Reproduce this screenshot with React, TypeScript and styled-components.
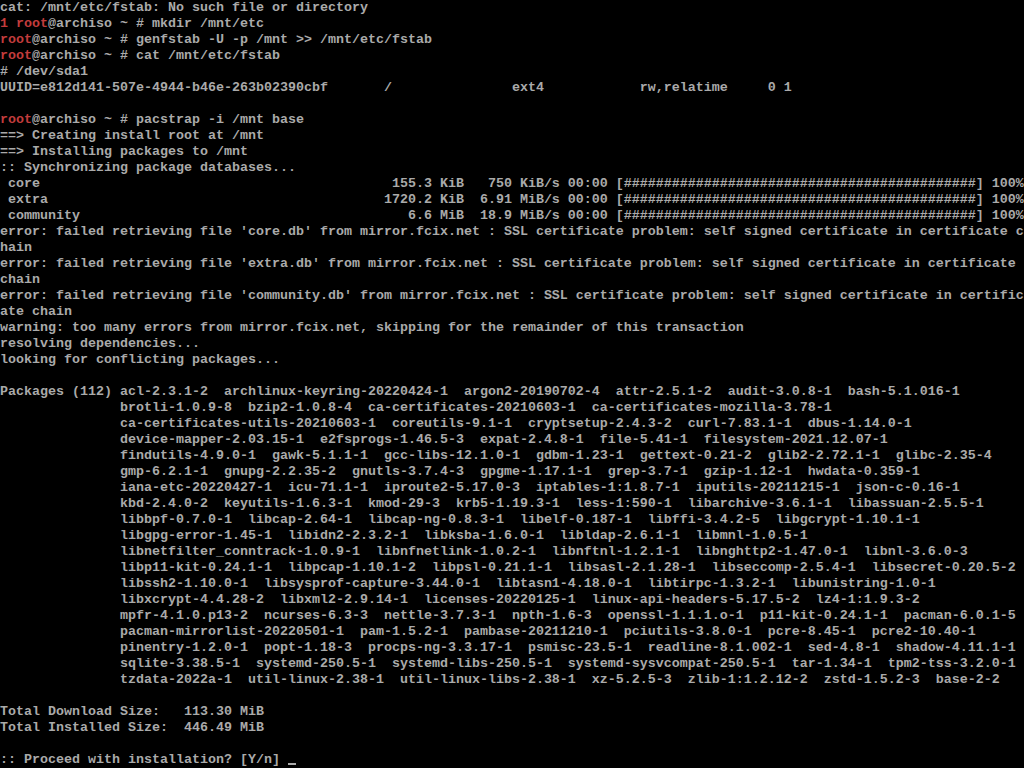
import React from 'react';
import styled, {createGlobalStyle} from 'styled-components';

const COLS = 128;

const GlobalStyle = createGlobalStyle`
    html, body {
        margin: 0;
        padding: 0;
        background: #000;
    }
`;

type Seg = { text: string; red?: boolean };
type Row = Seg[];

const prompt = (cmd: string, prefix = ''): Row => [
    {text: prefix + 'root', red: true},
    {text: '@archiso ~ # ' + cmd},
];

// wrap one plain logical line at the console width
const wrap = (text: string): Row[] => {
    const out: Row[] = [];
    for (let i = 0; i < text.length; i += COLS) {
        out.push([{text: text.slice(i, i + COLS)}]);
    }
    return out;
};

const plain = (text: string): Row => [{text}];

const syncLine = (name: string, size: string, unit: string, rate: string, rateUnit: string) =>
    `${(' ' + name).padEnd(48)}${size.padStart(6)} ${unit}  ${rate.padStart(4)} ${rateUnit}/s 00:00 [${'#'.repeat(44)}] 100%`;

const fstab = `${'UUID=e812d141-507e-4944-b46e-263b02390cbf'.padEnd(48)}${'/'.padEnd(16)}${'ext4'.padEnd(16)}${'rw,relatime'.padEnd(16)}0 1`;

const sslError = (db: string) =>
    `error: failed retrieving file '${db}' from mirror.fcix.net : SSL certificate problem: self signed certificate in certificate chain`;

const packages = [
    'acl-2.3.1-2  archlinux-keyring-20220424-1  argon2-20190702-4  attr-2.5.1-2  audit-3.0.8-1  bash-5.1.016-1',
    'brotli-1.0.9-8  bzip2-1.0.8-4  ca-certificates-20210603-1  ca-certificates-mozilla-3.78-1',
    'ca-certificates-utils-20210603-1  coreutils-9.1-1  cryptsetup-2.4.3-2  curl-7.83.1-1  dbus-1.14.0-1',
    'device-mapper-2.03.15-1  e2fsprogs-1.46.5-3  expat-2.4.8-1  file-5.41-1  filesystem-2021.12.07-1',
    'findutils-4.9.0-1  gawk-5.1.1-1  gcc-libs-12.1.0-1  gdbm-1.23-1  gettext-0.21-2  glib2-2.72.1-1  glibc-2.35-4',
    'gmp-6.2.1-1  gnupg-2.2.35-2  gnutls-3.7.4-3  gpgme-1.17.1-1  grep-3.7-1  gzip-1.12-1  hwdata-0.359-1',
    'iana-etc-20220427-1  icu-71.1-1  iproute2-5.17.0-3  iptables-1:1.8.7-1  iputils-20211215-1  json-c-0.16-1',
    'kbd-2.4.0-2  keyutils-1.6.3-1  kmod-29-3  krb5-1.19.3-1  less-1:590-1  libarchive-3.6.1-1  libassuan-2.5.5-1',
    'libbpf-0.7.0-1  libcap-2.64-1  libcap-ng-0.8.3-1  libelf-0.187-1  libffi-3.4.2-5  libgcrypt-1.10.1-1',
    'libgpg-error-1.45-1  libidn2-2.3.2-1  libksba-1.6.0-1  libldap-2.6.1-1  libmnl-1.0.5-1',
    'libnetfilter_conntrack-1.0.9-1  libnfnetlink-1.0.2-1  libnftnl-1.2.1-1  libnghttp2-1.47.0-1  libnl-3.6.0-3',
    'libp11-kit-0.24.1-1  libpcap-1.10.1-2  libpsl-0.21.1-1  libsasl-2.1.28-1  libseccomp-2.5.4-1  libsecret-0.20.5-2',
    'libssh2-1.10.0-1  libsysprof-capture-3.44.0-1  libtasn1-4.18.0-1  libtirpc-1.3.2-1  libunistring-1.0-1',
    'libxcrypt-4.4.28-2  libxml2-2.9.14-1  licenses-20220125-1  linux-api-headers-5.17.5-2  lz4-1:1.9.3-2',
    'mpfr-4.1.0.p13-2  ncurses-6.3-3  nettle-3.7.3-1  npth-1.6-3  openssl-1.1.1.o-1  p11-kit-0.24.1-1  pacman-6.0.1-5',
    'pacman-mirrorlist-20220501-1  pam-1.5.2-1  pambase-20211210-1  pciutils-3.8.0-1  pcre-8.45-1  pcre2-10.40-1',
    'pinentry-1.2.0-1  popt-1.18-3  procps-ng-3.3.17-1  psmisc-23.5-1  readline-8.1.002-1  sed-4.8-1  shadow-4.11.1-1',
    'sqlite-3.38.5-1  systemd-250.5-1  systemd-libs-250.5-1  systemd-sysvcompat-250.5-1  tar-1.34-1  tpm2-tss-3.2.0-1',
    'tzdata-2022a-1  util-linux-2.38-1  util-linux-libs-2.38-1  xz-5.2.5-3  zlib-1:1.2.12-2  zstd-1.5.2-3  base-2-2',
];

const rows: Row[] = [
    plain('cat: /mnt/etc/fstab: No such file or directory'),
    prompt('mkdir /mnt/etc', '1 '),
    prompt('genfstab -U -p /mnt >> /mnt/etc/fstab'),
    prompt('cat /mnt/etc/fstab'),
    plain('# /dev/sda1'),
    plain(fstab),
    plain(''),
    prompt('pacstrap -i /mnt base'),
    plain('==> Creating install root at /mnt'),
    plain('==> Installing packages to /mnt'),
    plain(':: Synchronizing package databases...'),
    plain(syncLine('core', '155.3', 'KiB', '750', 'KiB')),
    plain(syncLine('extra', '1720.2', 'KiB', '6.91', 'MiB')),
    plain(syncLine('community', '6.6', 'MiB', '18.9', 'MiB')),
    ...wrap(sslError('core.db')),
    ...wrap(sslError('extra.db')),
    ...wrap(sslError('community.db')),
    plain('warning: too many errors from mirror.fcix.net, skipping for the remainder of this transaction'),
    plain('resolving dependencies...'),
    plain('looking for conflicting packages...'),
    plain(''),
    ...packages.map((p, i) => plain((i === 0 ? 'Packages (112) ' : ' '.repeat(15)) + p)),
    plain(''),
    plain('Total Download Size:   113.30 MiB'),
    plain('Total Installed Size:  446.49 MiB'),
    plain(''),
];

const App = () => {
    return (
        <>
            <GlobalStyle/>
            <Screen>
                {rows.map((row, i) => (
                    <Line key={i}>
                        {row.map((seg, j) => (
                            <Seg key={j} $red={seg.red}>{seg.text}</Seg>
                        ))}
                    </Line>
                ))}
                <Line>
                    <Seg>:: Proceed with installation? [Y/n] </Seg>
                    <Cursor/>
                </Line>
            </Screen>
        </>
    );
};

const Screen = styled.div`
    width: 1024px;
    height: 768px;
    overflow: hidden;
    background: #000;
    color: #aaaaaa;
    font-family: "Liberation Mono", "DejaVu Sans Mono", monospace;
    font-size: 13.333px;
    font-weight: bold;
`;

const Line = styled.div`
    height: 16px;
    line-height: 16px;
    white-space: pre;
    overflow: hidden;
`;

const Seg = styled.span<{ $red?: boolean }>`
    color: ${p => (p.$red ? '#c23c3c' : '#aaaaaa')};
`;

const Cursor = styled.span`
    display: inline-block;
    width: 8px;
    height: 2px;
    background: #aaaaaa;
    vertical-align: -2px;
`;

export default App;
